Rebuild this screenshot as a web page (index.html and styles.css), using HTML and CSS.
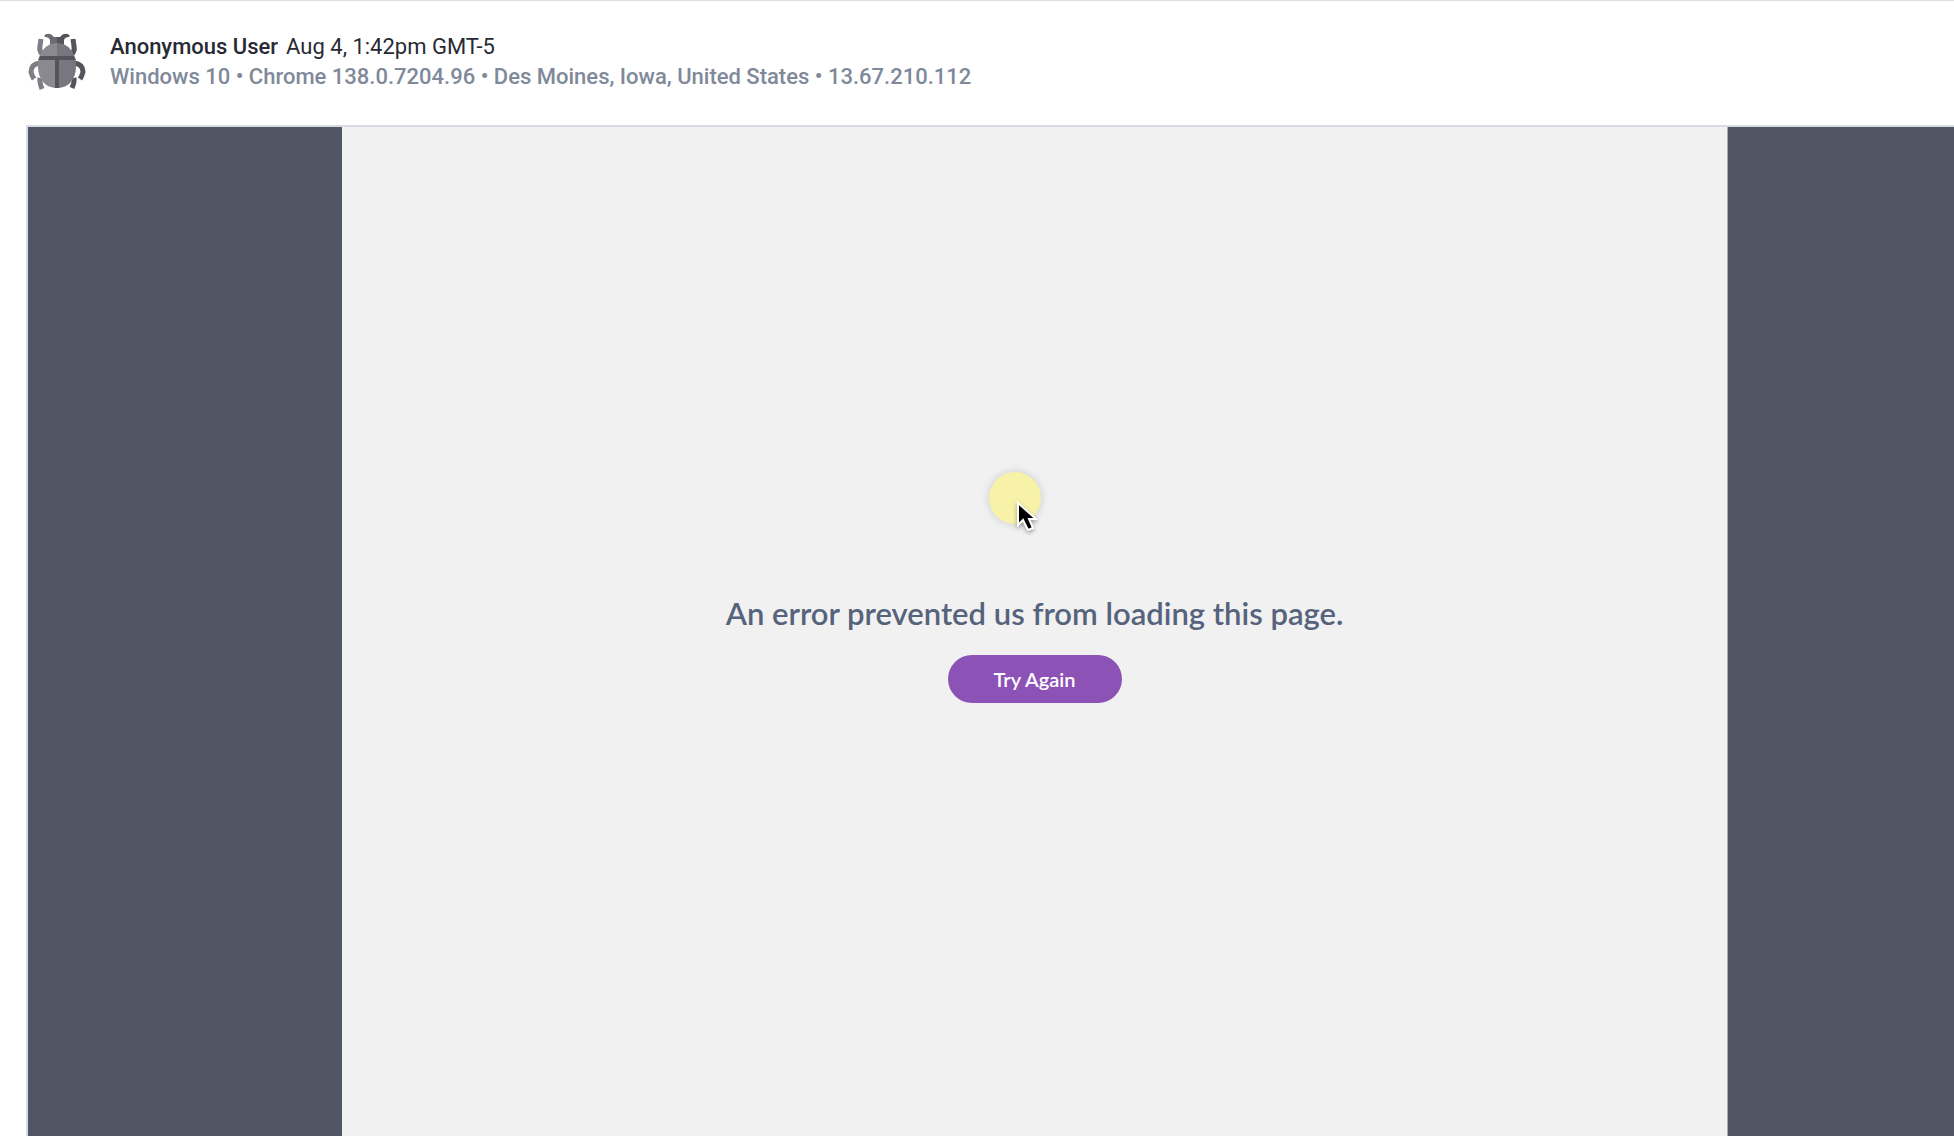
FILE: index.html
```html
<!DOCTYPE html>
<html lang="en">
<head>
<meta charset="utf-8">
<meta name="viewport" content="width=device-width, initial-scale=1">
<title>Session replay</title>
<link rel="stylesheet" href="styles.css">
</head>
<body>
<header class="session">
  <svg class="avatar" viewBox="0 0 62 64" aria-hidden="true">
    <g fill="none" stroke-width="5">
      <path stroke="#7f7e87" d="M16 24Q13 21 14 16L15 9M14 33Q5 34 5 42Q6 46 8 49M14 48Q13 51 16 59"/>
      <path stroke="#55545b" d="M46 24Q49 21 48 16L47 9M48 33Q57 34 57 42Q56 46 54 49M48 48Q49 51 46 58"/>
    </g>
    <path fill="#6b6a72" d="M31 7H28Q25 3 21 4Q17 5 19 7Q23 7 24 10V16H31Z"/>
    <path fill="#55545b" d="M31 7H34Q37 3 41 4Q45 5 43 7Q39 7 38 10V16H31Z"/>
    <path fill="#8a8990" d="M31 13C19 13 12 24 12 36C12 49 19 58 31 58Z"/>
    <path fill="#78777f" d="M31 13C43 13 50 24 50 36C50 49 43 58 31 58Z"/>
    <path fill="#55545b" d="M14 26H48L50 30H33V58H29V30H12Z"/>
  </svg>
  <div class="details">
    <div class="who"><span>Anonymous User</span><time>Aug 4, 1:42pm GMT-5</time></div>
    <div class="meta">Windows 10 • Chrome 138.0.7204.96 • Des Moines, Iowa, United States • 13.67.210.112</div>
  </div>
</header>
<main class="player">
  <section class="viewport">
    <h1 class="message">An error prevented us from loading this page.</h1>
    <button class="retry" type="button">Try Again</button>
    <div class="pointer">
      <svg class="cursor" viewBox="0 0 28 36" aria-hidden="true">
        <path d="M3 3V25L8 20L13 30L18 28L14 19H21Z" fill="#000" stroke="#fff" stroke-width="2"/>
      </svg>
    </div>
  </section>
</main>
</body>
</html>
```

FILE: styles.css
```css
* {
  box-sizing: border-box;
}

body {
  margin: 0;
  min-height: 100vh;
  display: flex;
  flex-direction: column;
  background: #fff;
  border-top: 1px solid #dadce6;
  font-family: Roboto, "Liberation Sans", sans-serif;
}

.session {
  display: flex;
  align-items: flex-start;
  gap: 22px;
  padding: 29px 26px 31px;
}

.avatar {
  width: 62px;
  height: 64px;
  flex: none;
}

.details {
  padding-top: 2px;
  font-size: 22px;
  line-height: 30px;
  font-weight: 500;
}

.who {
  display: flex;
  gap: 8px;
  color: #282a33;
}

.who time {
  font-weight: 400;
}

.meta {
  color: #808999;
}

.player {
  flex: 1;
  display: flex;
  margin-left: 26px;
  padding: 0 226px 0 314px;
  background: #505664;
  border-top: 2px solid #d8dbe3;
  border-left: 2px solid #d8dbe3;
}

.viewport {
  position: relative;
  flex: 1;
  display: flex;
  flex-direction: column;
  align-items: center;
  justify-content: center;
  gap: 22px;
  padding-top: 32px;
  background: #f1f1f1;
  border-right: 1px solid #a9acb3;
  font-family: Lato, "Liberation Sans", sans-serif;
}

.message {
  margin: 0;
  color: #56637c;
  font-size: 31px;
  line-height: 40px;
  font-weight: 600;
}

.retry {
  width: 174px;
  height: 48px;
  padding: 0;
  border: 0;
  border-radius: 24px;
  background: #8c52b5;
  color: #fff;
  font: 600 20px/24px Lato, "Liberation Sans", sans-serif;
}

.pointer {
  position: absolute;
  left: calc(50% - 46px);
  top: 345px;
  width: 52px;
  height: 52px;
  border-radius: 50%;
  background: #f7f2a8;
  box-shadow: 0 0 8px rgba(0, 0, 0, 0.16);
}

.cursor {
  position: absolute;
  left: 26px;
  top: 28px;
  width: 28px;
  height: 36px;
  filter: drop-shadow(0 2px 2px rgba(0, 0, 0, 0.35));
}
```
